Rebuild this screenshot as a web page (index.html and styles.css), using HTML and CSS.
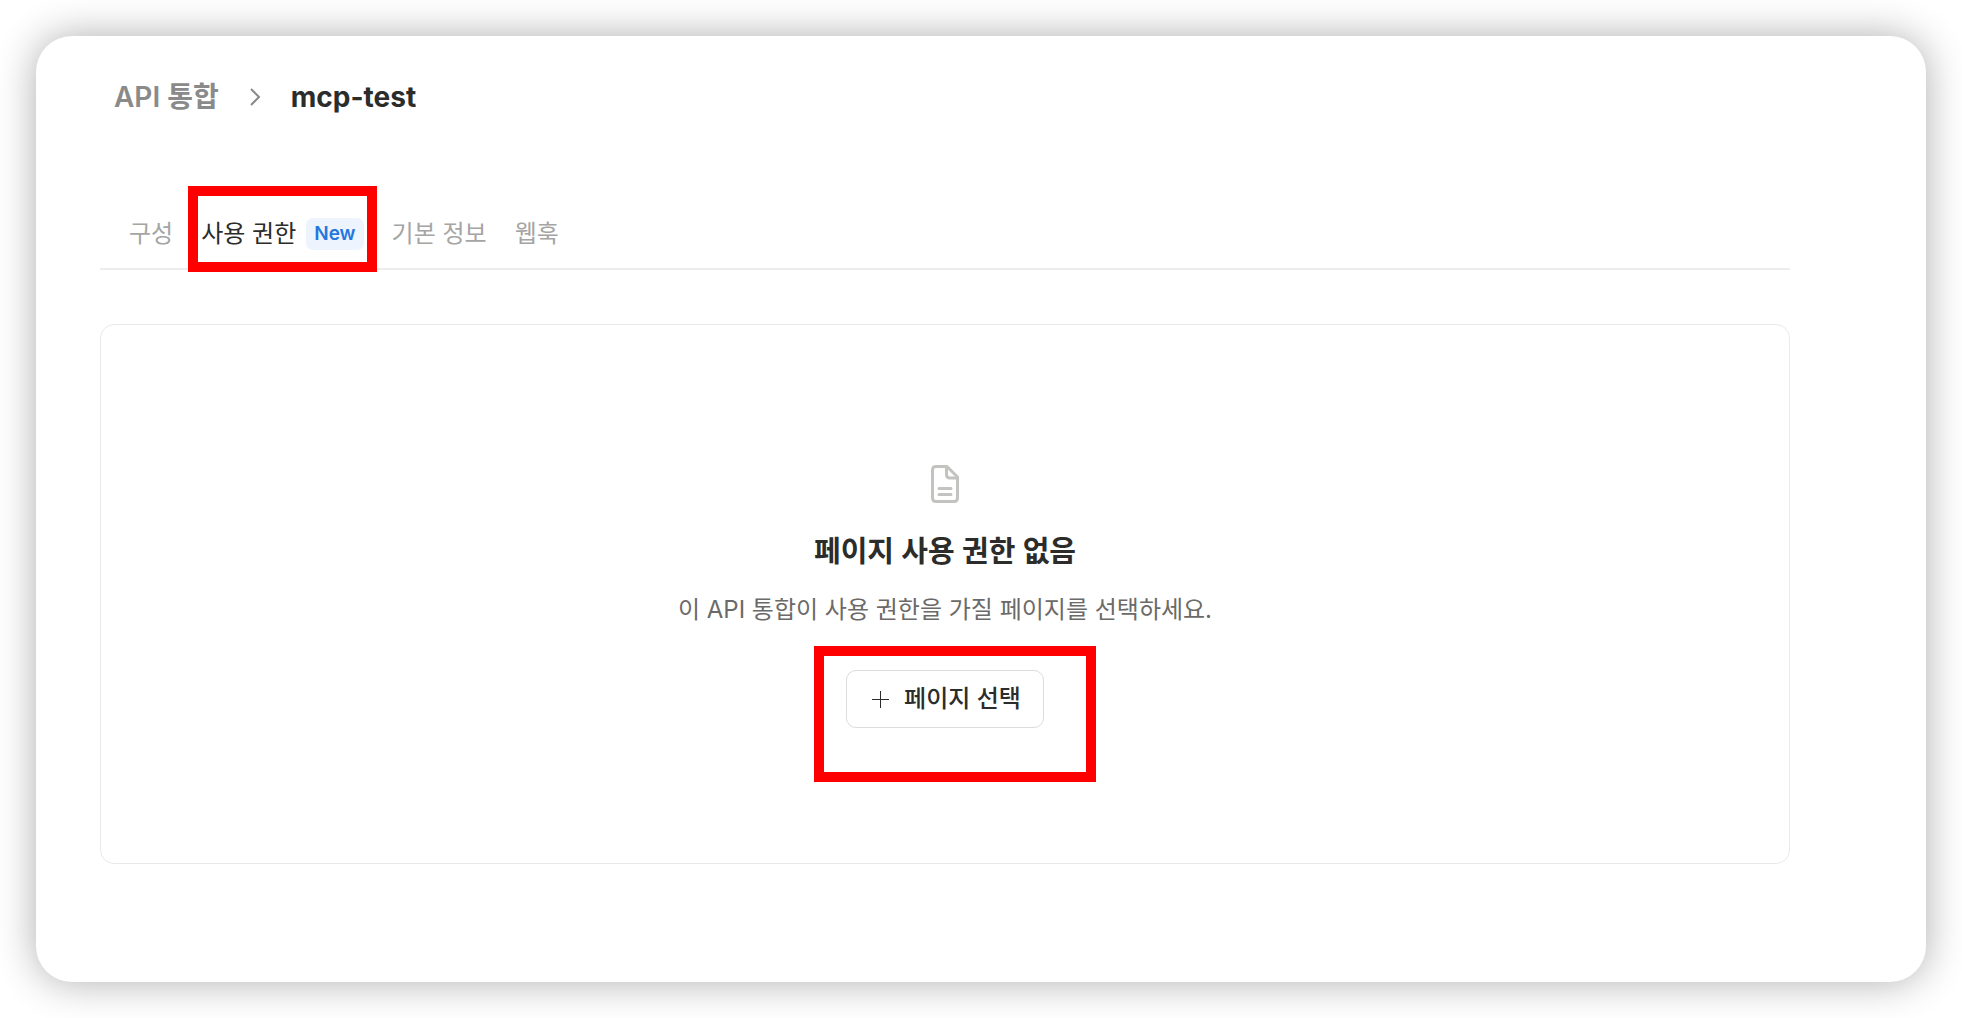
FILE: index.html
```html
<!DOCTYPE html>
<html lang="ko">
<head>
<meta charset="utf-8">
<meta name="viewport" content="width=device-width, initial-scale=1">
<title>API 통합 - mcp-test</title>
<link rel="stylesheet" href="styles.css">
</head>
<body>
<main class="window">
  <nav class="breadcrumb" aria-label="breadcrumb">
    <a class="crumb" href="#">API 통합</a>
    <svg class="chevron" viewBox="0 0 12 20" aria-hidden="true"><path d="M2 2l8 8-8 8"/></svg>
    <h1 class="title">mcp-test</h1>
  </nav>

  <div class="tabs" role="tablist">
    <button class="tab" type="button" role="tab" aria-selected="false">구성</button>
    <button class="tab tab-active" type="button" role="tab" aria-selected="true">사용 권한<span class="badge">New</span></button>
    <button class="tab" type="button" role="tab" aria-selected="false">기본 정보</button>
    <button class="tab" type="button" role="tab" aria-selected="false">웹훅</button>
  </div>

  <section class="card">
    <svg class="page-icon" viewBox="0 0 28 38" aria-hidden="true">
      <path d="M5 1.500H16L26.500 12V33Q26.500 36.500 23 36.500H5Q1.500 36.500 1.500 33V5Q1.500 1.500 5 1.500Z"/>
      <path d="M15.500 2V9.500Q15.500 13 19 13H26.500"/>
      <path class="page-lines" d="M8 23.500H20M8 29.500H20"/>
    </svg>
    <h2 class="heading">페이지 사용 권한 없음</h2>
    <p class="description">이 API 통합이 사용 권한을 가질 페이지를 선택하세요.</p>
    <div class="action">
      <button class="select-button" type="button">
        <svg class="plus" viewBox="0 0 17 17" aria-hidden="true"><path d="M8.500 0v17M0 8.500h17"/></svg>
        페이지 선택
      </button>
    </div>
  </section>
</main>
</body>
</html>
```
FILE: styles.css
```css
* {
  box-sizing: border-box;
}

body {
  margin: 0;
  padding: 36px;
  background: #fff;
  color: #2c2c2b;
  font-family: Inter, "Noto Sans CJK KR", sans-serif;
  font-size: 24px;
  line-height: 32px;
}

button {
  margin: 0;
  font: inherit;
  color: inherit;
  cursor: pointer;
}

svg {
  fill: none;
  stroke: currentColor;
}

.window {
  padding: 41px 136px 118px 64px;
  border-radius: 36px;
  background: #fff;
  box-shadow: 0 0 40px rgba(0, 0, 0, 0.32);
}

.breadcrumb {
  display: flex;
  align-items: center;
  gap: 30px;
  padding-left: 14px;
  line-height: 40px;
}

.crumb {
  color: #8a8a8a;
  font-size: 28px;
  font-weight: 600;
  text-decoration: none;
}

.chevron {
  width: 12px;
  height: 20px;
  color: #8a8a8a;
  stroke-width: 2;
}

.title {
  margin: 0;
  font-size: 28px;
  font-weight: 700;
}

.tabs {
  display: flex;
  gap: 28px;
  margin-top: 79px;
  padding-left: 29px;
  border-bottom: 2px solid #ededed;
}

.tab {
  display: flex;
  align-items: center;
  gap: 10px;
  height: 72px;
  padding: 4px 0 0;
  border: 0;
  background: none;
  color: #a5a5a4;
}

.tab-active {
  position: relative;
  color: #2c2c2b;
}

.badge {
  padding: 0 8px;
  border-radius: 7px;
  background: #edf4fd;
  color: #2478df;
  font-size: 19px;
  font-weight: 600;
}

/* Red callouts around the active tab and the button */
.tab-active::after,
.action::after {
  content: "";
  position: absolute;
  border: 10px solid #f00;
  pointer-events: none;
}

.tab-active::after {
  inset: -10px -13px -4px -13px;
}

.card {
  display: flex;
  flex-direction: column;
  align-items: center;
  margin-top: 54px;
  padding: 140px 24px 135px;
  border: 1px solid #e9e9e8;
  border-radius: 14px;
}

.page-icon {
  width: 28px;
  height: 38px;
  color: #c3c3bf;
  stroke-width: 3;
  stroke-linejoin: round;
}

.page-lines {
  stroke-width: 3;
  stroke-linecap: round;
}

.heading {
  margin: 29px 0 0;
  font-size: 29px;
  font-weight: 600;
  line-height: 40px;
}

.description {
  margin: 22px 0 0;
  color: #6b6a68;
}

.action {
  position: relative;
  margin-top: 44px;
}

.action::after {
  inset: -24px -52px -54px -32px;
}

.select-button {
  display: flex;
  align-items: center;
  gap: 15px;
  height: 58px;
  padding: 0 22px 0 25px;
  border: 1px solid #dcdcdb;
  border-radius: 10px;
  background: #fff;
  font-weight: 500;
}

.plus {
  width: 17px;
  height: 17px;
  stroke-width: 1;
}
```
